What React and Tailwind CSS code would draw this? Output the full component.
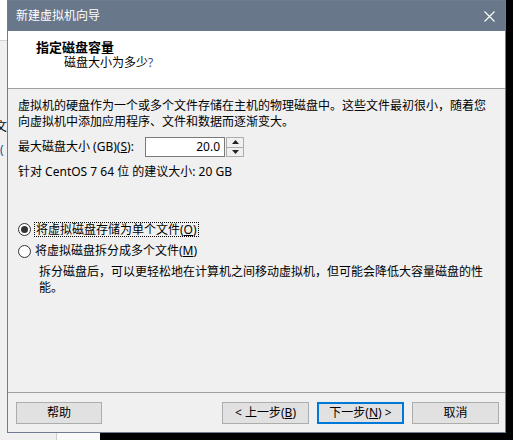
import React from 'react';

const font = { fontFamily: '"Noto Sans", "Noto Sans CJK SC", sans-serif' };

const Radio = ({ checked }) => (
  <span className="w-[13px] h-[13px] rounded-full border border-[#333333] bg-white flex items-center justify-center shrink-0">
    {checked && <span className="w-[7px] h-[7px] rounded-full bg-[#333333]" />}
  </span>
);

const Button = ({ children, primary, className = '' }) => (
  <div
    className={`h-[22px] flex items-center justify-center bg-[#e1e1e1] text-[12px] text-black ${
      primary ? 'border-2 border-[#0078d7]' : 'border border-[#adadad]'
    } ${className}`}
  >
    {children}
  </div>
);

const Arrow = ({ up }) => (
  <svg width="7" height="4" viewBox="0 0 7 4">
    {up ? <path d="M0 4 L3.5 0 L7 4 Z" fill="#222" /> : <path d="M0 0 L3.5 4 L7 0 Z" fill="#222" />}
  </svg>
);

export default function App() {
  return (
    <div className="relative w-[513px] h-[440px] bg-black overflow-hidden" style={font}>
      {/* window behind the dialog */}
      <div className="absolute left-0 top-0 w-[100px] h-[440px] bg-[#f0f0f0]">
        <div className="h-[41px] bg-white border-b border-[#d4d4d4]" />
        <span className="absolute left-[-5px] top-[119px] text-[12px] leading-4 text-black">文</span>
        <span className="absolute left-[0px] top-[142px] text-[12px] leading-4 text-[#1a4f9c]">(</span>
        <div className="absolute left-[56px] top-[433px] w-[44px] h-[7px] bg-[#fafafa] border-l border-[#cfcfcf]" />
      </div>

      {/* dialog */}
      <div className="absolute left-[7px] top-0 w-[499px] h-[433px] flex flex-col bg-[#f0f0f0] border border-[#6f7d8e]">
        {/* title bar */}
        <div className="h-[30px] shrink-0 bg-[#687789] flex items-center justify-between pl-2 pr-[10px]">
          <span className="text-[12px] text-white">新建虚拟机向导</span>
          <svg width="11" height="11" viewBox="0 0 11 11">
            <path d="M0.5 0.5 L10.5 10.5 M10.5 0.5 L0.5 10.5" stroke="#ffffff" strokeWidth="1.1" />
          </svg>
        </div>

        {/* header */}
        <div className="h-[58px] shrink-0 bg-white border-b border-[#a0a0a0] pt-[8px] pl-[28px]">
          <div className="text-[13px] leading-4 font-bold text-black">指定磁盘容量</div>
          <div className="text-[12px] leading-4 text-black ml-[28px]">
            磁盘大小为多少<span className="text-[#3b4f8a]">?</span>
          </div>
        </div>

        {/* body */}
        <div className="flex-1 pt-[9px] pl-[10px] text-[12px] leading-4 text-black">
          <div className="whitespace-nowrap">
            <div>虚拟机的硬盘作为一个或多个文件存储在主机的物理磁盘中。这些文件最初很小，随着您</div>
            <div>向虚拟机中添加应用程序、文件和数据而逐渐变大。</div>
          </div>

          <div className="mt-[7px] h-[20px] flex items-center">
            <span className="w-[127px] whitespace-nowrap">
              最大磁盘大小 (GB)(<span className="underline">S</span>):
            </span>
            <div className="w-[80px] h-[20px] bg-white border border-[#7a7a7a] flex items-center justify-end pr-[4px] text-[12px]">
              20.0
            </div>
            <div className="ml-[1px] w-[18px] h-[20px] flex flex-col border border-[#adadad] bg-[#f0f0f0]">
              <div className="flex-1 flex items-center justify-center border-b border-[#adadad]">
                <Arrow up />
              </div>
              <div className="flex-1 flex items-center justify-center">
                <Arrow />
              </div>
            </div>
          </div>

          <div className="mt-[7px] whitespace-nowrap">针对 CentOS 7 64 位 的建议大小: 20 GB</div>

          <div className="mt-[38px] h-[22px] flex items-center gap-[3px]">
            <Radio checked />
            <span className="border border-dotted border-black px-[1px] leading-[13px] whitespace-nowrap">
              将虚拟磁盘存储为单个文件(<span className="underline">O</span>)
            </span>
          </div>
          <div className="h-[22px] flex items-center gap-[4px]">
            <Radio />
            <span className="whitespace-nowrap">
              将虚拟磁盘拆分成多个文件(<span className="underline">M</span>)
            </span>
          </div>
          <div className="mt-[2px] ml-[21px] whitespace-nowrap">
            <div>拆分磁盘后，可以更轻松地在计算机之间移动虚拟机，但可能会降低大容量磁盘的性</div>
            <div>能。</div>
          </div>
        </div>

        {/* footer */}
        <div className="h-[40px] shrink-0 border-t border-[#a0a0a0] pt-[9px] pl-[8px] pr-[6px] flex items-start justify-between">
          <Button className="w-[86px]">帮助</Button>
          <div className="flex gap-[8px]">
            <Button className="w-[87px]">
              &lt; 上一步(<span className="underline">B</span>)
            </Button>
            <Button primary className="w-[87px]">
              下一步(<span className="underline">N</span>) &gt;
            </Button>
            <Button className="w-[87px]">取消</Button>
          </div>
        </div>
      </div>
    </div>
  );
}
